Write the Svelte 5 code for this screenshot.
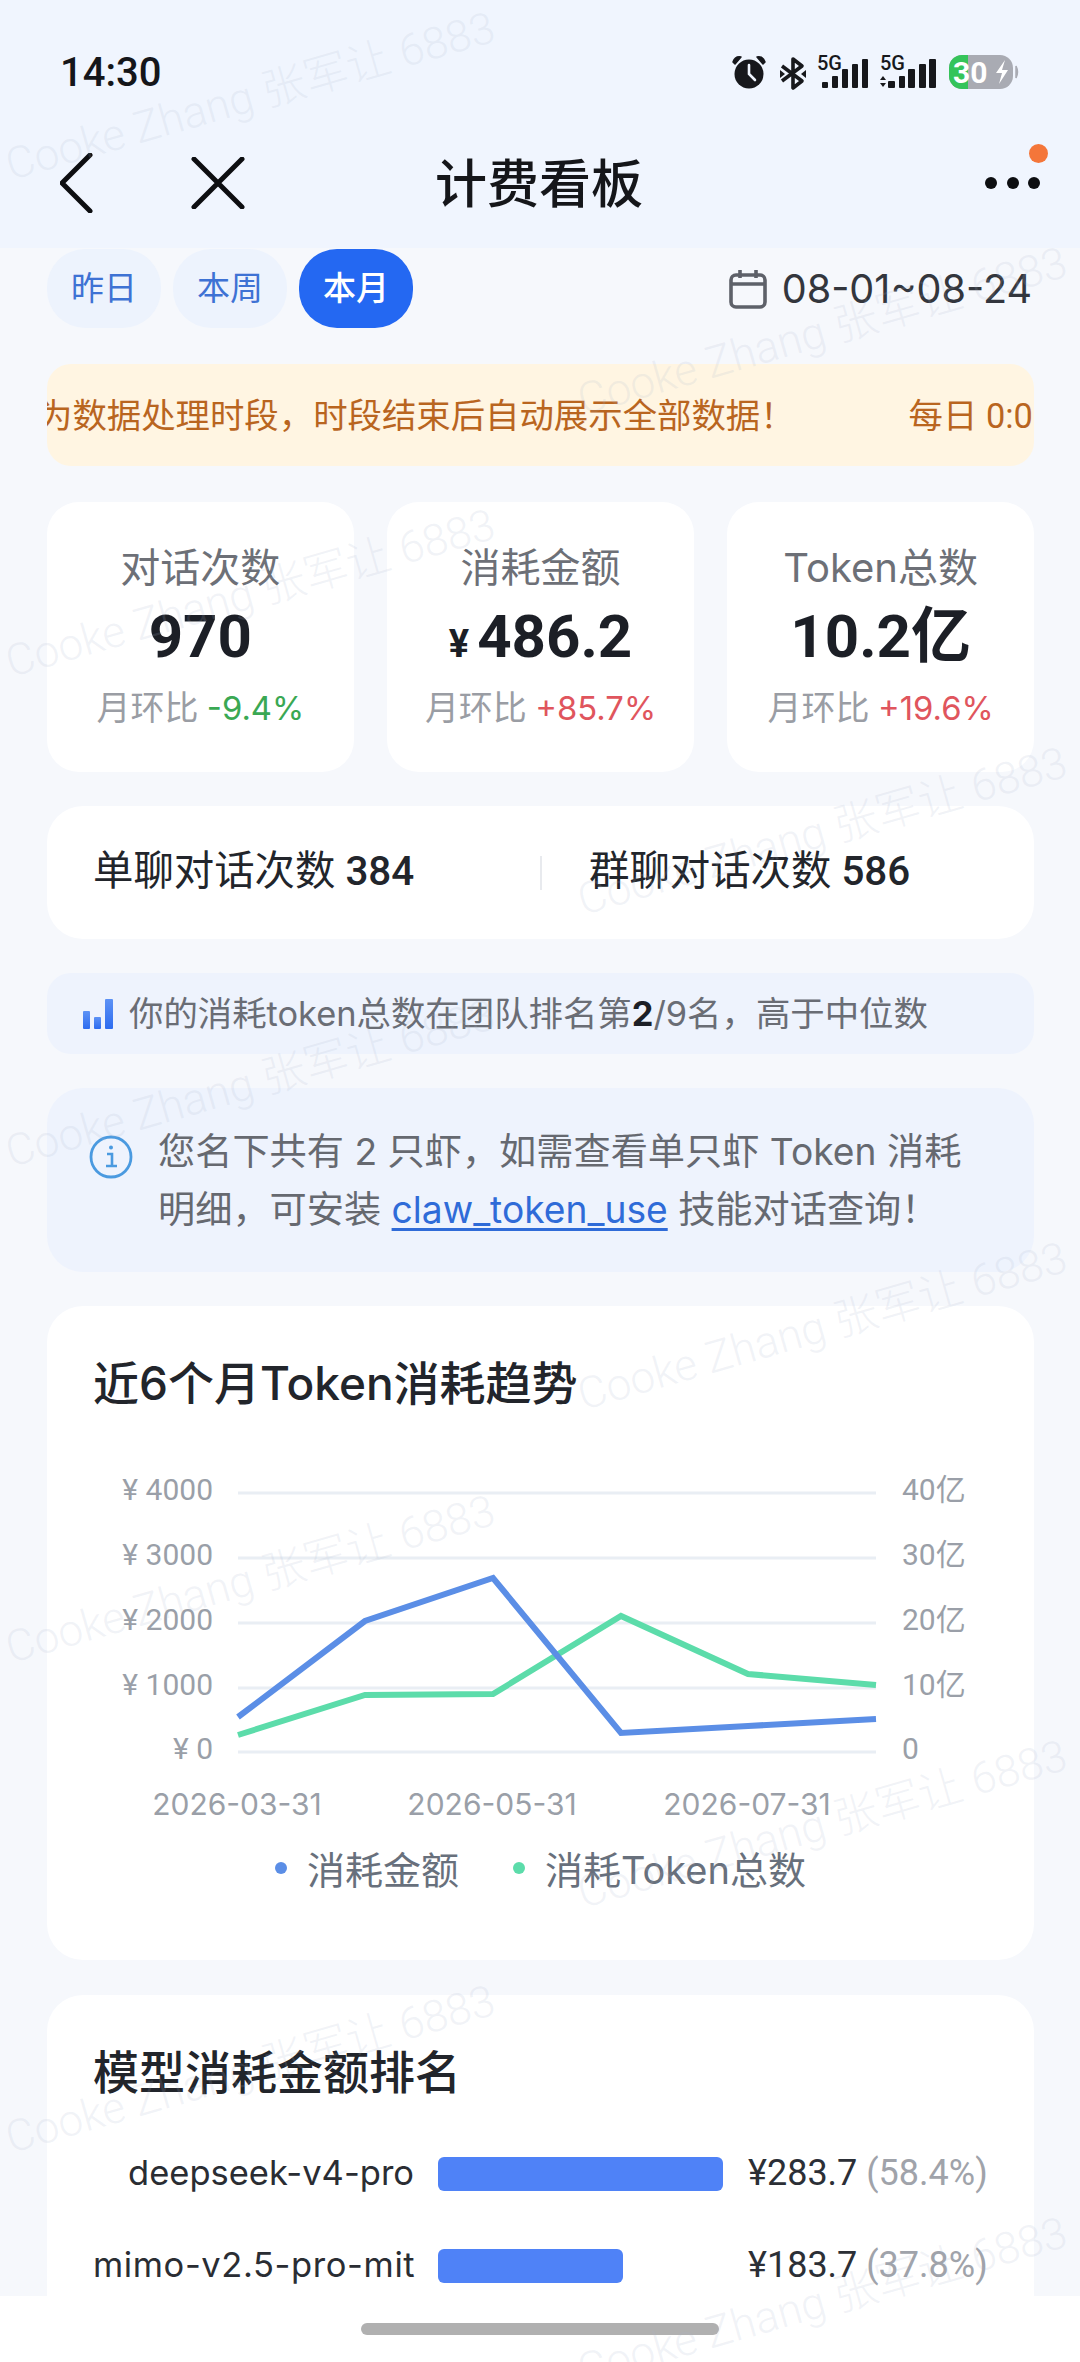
<script>
  const marks = [];
  const left = [187, 684, 1174, 1670, 2160];
  const right = [422, 922, 1417, 1915, 2392];
  for (const y of left) marks.push({ x: 13, y });
  for (const y of right) marks.push({ x: 585, y });

  const stats = [
    { label: '对话次数', value: '970', cur: '', sub: '-9.4%', tone: 'down' },
    { label: '消耗金额', value: '486.2', cur: '¥', sub: '+85.7%', tone: 'up' },
    { label: 'Token总数', value: '10.2亿', cur: '', sub: '+19.6%', tone: 'up' }
  ];
  const gridY = [1493, 1558, 1623, 1688, 1752];
  const leftLabels = ['¥ 4000', '¥ 3000', '¥ 2000', '¥ 1000', '¥ 0'];
  const rightLabels = ['40亿', '30亿', '20亿', '10亿', '0'];
  const xLabels = [{ x: 237, t: '2026-03-31' }, { x: 492, t: '2026-05-31' }, { x: 747, t: '2026-07-31' }];
  const blue = '238,1717 365,1621 493,1578 621,1733 748,1726 876,1719';
  const green = '238,1735 365,1695 493,1694 621,1616 748,1674 876,1685';
  const models = [
    { name: 'deepseek-v4-pro', w: 285, ls: 0, amt: '¥283.7', pct: '(58.4%)' },
    { name: 'mimo-v2.5-pro-mit', w: 185, ls: 0.6, amt: '¥183.7', pct: '(37.8%)' }
  ];
</script>

<div class="page">
  <header class="head">
    <div class="status">
      <span class="time">14:30</span>
      <svg class="sicons" width="340" height="50" viewBox="700 48 340 50" aria-hidden="true">
        <circle cx="749" cy="74" r="14.5" fill="#17181c" />
        <path d="M749 65v9l6 6" fill="none" stroke="#f0f5ff" stroke-width="2.6" stroke-linecap="round" />
        <path d="M733 62q2-6 8-5l-6 7zM765 62q-2-6-8-5l6 7z" fill="#17181c" stroke="#17181c" stroke-width="1.5" stroke-linejoin="round" />
        <path d="M782 66l20 15-9 7V59l9 7-20 15" fill="none" stroke="#17181c" stroke-width="3.6" stroke-linejoin="round" />
        <path d="M780 70l5 4-5 4zM806 70l-5 4 5 4z" fill="#17181c" />
        <text x="817" y="70" class="fg">5G</text>
        <rect x="822" y="82" width="6" height="6" rx="1" /><rect x="832" y="76" width="6" height="12" rx="1" />
        <rect x="842" y="69" width="6" height="19" rx="1" /><rect x="852" y="64" width="6" height="24" rx="1" />
        <rect x="862" y="59" width="6" height="29" rx="1" />
        <text x="880" y="70" class="fg">5G</text>
        <path d="M880 80l3-4 3 4zM880 83l3 4 3-4z" fill="#17181c" />
        <rect x="888" y="81" width="7" height="7" rx="1" /><rect x="899" y="76" width="6" height="12" rx="1" />
        <rect x="908" y="69" width="7" height="19" rx="1" /><rect x="919" y="64" width="7" height="24" rx="1" />
        <rect x="929" y="59" width="7" height="29" rx="1" />
        <rect x="949" y="55" width="64" height="34" rx="13" fill="#a9abb3" />
        <path d="M962 55h6v34h-6a13 13 0 0 1-13-13v-8a13 13 0 0 1 13-13z" fill="#35c45a" />
        <text x="953" y="83" class="bat">30</text>
        <path d="M1005 60l-9 13h6l-3 11 9-14h-6z" fill="#fff" />
        <path d="M1016 66q3 6 0 12z" fill="#a9abb3" stroke="#a9abb3" stroke-width="1.5" />
      </svg>
    </div>
    <nav class="nav">
      <div class="navl">
        <svg width="34" height="60" viewBox="0 0 34 60" aria-hidden="true"><path d="M30 2L2 30l28 28" fill="none" stroke="#0d0e11" stroke-width="5" stroke-linecap="round" stroke-linejoin="round" /></svg>
        <svg width="54" height="52" viewBox="0 0 54 52" aria-hidden="true"><path d="M3 2l48 48M51 2L3 50" fill="none" stroke="#0d0e11" stroke-width="5" stroke-linecap="round" /></svg>
      </div>
      <h1>计费看板</h1>
      <div class="more">
        <i></i><i></i><i></i>
        <b class="dot"></b>
      </div>
    </nav>
  </header>

  <main class="main">
    <div class="filters">
      <div class="tabs">
        <span class="tab">昨日</span>
        <span class="tab">本周</span>
        <span class="tab on">本月</span>
      </div>
      <div class="range">
        <svg width="38" height="40" viewBox="0 0 38 40" aria-hidden="true">
          <rect x="2" y="6" width="34" height="32" rx="5" fill="none" stroke="#5e6169" stroke-width="3.6" />
          <path d="M2 15h34M11 1v8M27 1v8" fill="none" stroke="#5e6169" stroke-width="3.6" />
        </svg>
        <span>08-01~08-24</span>
      </div>
    </div>

    <div class="notice">
      <div class="ticker">
        <span>为数据处理时段，时段结束后自动展示全部数据！</span>
        <span>每日 0:00</span>
      </div>
    </div>

    <section class="stats">
      {#each stats as s}
        <div class="stat">
          <div class="lab">{s.label}</div>
          <div class="val">{#if s.cur}<em>{s.cur}</em>{/if}{s.value}</div>
          <div class="sub">月环比 <span class={s.tone}>{s.sub}</span></div>
        </div>
      {/each}
    </section>

    <section class="chats">
      <div class="c1">单聊对话次数 <b>384</b></div>
      <div class="sep"></div>
      <div class="c2">群聊对话次数 <b>586</b></div>
    </section>

    <section class="rank">
      <svg width="30" height="30" viewBox="0 0 30 30" aria-hidden="true">
        <defs><linearGradient id="bg1" x1="0" y1="0" x2="0" y2="1"><stop offset="0" stop-color="#5d92f5" /><stop offset="1" stop-color="#2d6cf0" /></linearGradient></defs>
        <rect x="0" y="12" width="7" height="18" rx="1" fill="url(#bg1)" /><rect x="11" y="18" width="7" height="12" rx="1" fill="url(#bg1)" /><rect x="22" y="0" width="8" height="30" rx="1" fill="url(#bg1)" />
      </svg>
      <p>你的消耗token总数在团队排名第<strong>2</strong>/9名，高于中位数</p>
    </section>

    <section class="info">
      <svg class="ii" width="44" height="44" viewBox="0 0 44 44" aria-hidden="true">
        <circle cx="22" cy="22" r="20" fill="none" stroke="#4a9ae0" stroke-width="2.8" />
        <path d="M18 19h5v12M17 31h11" fill="none" stroke="#4a9ae0" stroke-width="2.6" />
        <circle cx="22" cy="12.5" r="2" fill="#4a9ae0" />
      </svg>
      <p>您名下共有 2 只虾，如需查看单只虾 Token 消耗<br />明细，可安装 <a href="#top">claw_token_use</a> 技能对话查询！</p>
    </section>

    <section class="card chart">
      <h2>近6个月Token消耗趋势</h2>
      <svg class="plot" width="987" height="380" viewBox="47 1460 987 380" aria-hidden="true">
        {#each gridY as y, i}
          <line x1="238" x2="876" y1={y} y2={y} class="grid" />
          <text x="213" y={y - 4} text-anchor="end" class="ax">{leftLabels[i]}</text>
          <text x="902" y={y - 4} class="ax">{rightLabels[i]}</text>
        {/each}
        {#each xLabels as l}
          <text x={l.x} y="1804" text-anchor="middle" class="ax dt">{l.t}</text>
        {/each}
        <polyline points={green} class="ln" stroke="#5cdcaa" />
        <polyline points={blue} class="ln" stroke="#5b8ee6" />
      </svg>
      <div class="legend">
        <span class="li"><i class="b"></i>消耗金额</span>
        <span class="li"><i class="g"></i>消耗Token总数</span>
      </div>
    </section>

    <section class="card models">
      <h2>模型消耗金额排名</h2>
      <div class="rows">
        {#each models as m}
          <div class="row">
            <span class="mn" style="letter-spacing:{m.ls}px">{m.name}</span>
            <span class="track"><span class="fill" style="width:{m.w}px"></span></span>
            <span class="amt">{m.amt} <span class="pct">{m.pct}</span></span>
          </div>
        {/each}
      </div>
    </section>
  </main>

  <div class="home"><span></span></div>

  <div class="wm" aria-hidden="true">
    {#each marks as m}
      <span style="left:{m.x}px;top:{m.y}px">Cooke Zhang 张军让 6883</span>
    {/each}
  </div>
</div>

<style>
  :global(body) { margin: 0; background: #f6f8fc; }
  .page {
    position: relative; width: 1080px; height: 2362px; overflow: hidden;
    background: #f6f8fc;
    font-family: Roboto, "Noto Sans CJK SC", sans-serif; color: #22252b;
  }
  .head { height: 248px; background: #f0f5fe; box-sizing: border-box; padding: 0 40px 0 60px; display: flex; flex-direction: column; }
  .status { height: 118px; display: flex; justify-content: space-between; align-items: flex-start; }
  .time { font-size: 40px; font-weight: 500; color: #15161a; line-height: 46px; margin-top: 50px; }
  .sicons { margin-top: 48px; fill: #17181c; flex: none; }
  .fg { font: 500 20px Roboto, sans-serif; fill: #17181c; }
  .bat { font: 700 30px Roboto, sans-serif; fill: #fff; }
  .nav { position: relative; height: 130px; display: flex; align-items: center; justify-content: space-between; box-sizing: border-box; }
  .navl { display: flex; align-items: center; gap: 97px; }
  h1 { position: absolute; left: 375px; top: 38px; margin: 0; font-size: 52px; font-weight: 500; line-height: 60px; color: #15161a; }
  .more { position: relative; display: flex; gap: 9.5px; }
  .more i { width: 12px; height: 12px; border-radius: 50%; background: #0d0e11; }
  .dot { position: absolute; right: -8px; top: -33px; width: 19px; height: 19px; border-radius: 50%; background: #f4763a; }

  .main { box-sizing: border-box; padding: 1px 46px 0 47px; display: flex; flex-direction: column; }
  .filters { display: flex; justify-content: space-between; align-items: center; height: 79px; }
  .tabs { display: flex; gap: 12px; }
  .tab { width: 114px; height: 79px; box-sizing: border-box; padding-bottom: 6px; border-radius: 38px; background: #edf3fd; color: #3e72d4; font-size: 33px; display: flex; align-items: center; justify-content: center; }
  .tab.on { background: #2468f2; color: #fff; font-weight: 500; }
  .range { display: flex; align-items: center; gap: 15px; font-family: Inter, sans-serif; font-size: 39.6px; color: #33363d; padding-right: 2px; }
  .notice { margin-top: 36px; height: 102px; box-sizing: border-box; padding-bottom: 5px; border-radius: 24px; background: #fff5e2; overflow: hidden; display: flex; align-items: center; }
  .ticker { display: flex; gap: 114px; white-space: nowrap; font-size: 34.4px; color: #b9651f; margin-left: -9px; flex: none; }

  .stats { margin-top: 36px; display: grid; grid-template-columns: repeat(3, 1fr); gap: 33.5px; }
  .stat { height: 270px; border-radius: 32px; background: #fff; display: flex; flex-direction: column; align-items: center; padding-top: 38px; box-sizing: border-box; }
  .lab { font-family: Inter, "Noto Sans CJK SC", sans-serif; font-size: 40px; line-height: 56px; color: #6d7077; }
  .val { font-size: 60px; font-weight: 700; height: 70px; line-height: 70px; margin-top: 6px; color: #1c1f26; display: flex; align-items: baseline; }
  .val em { font-style: normal; font-size: 38px; margin-right: 8px; }
  .sub { font-size: 34px; height: 48px; line-height: 48px; margin-top: 12px; color: #9a9da4; white-space: nowrap; }
  .sub span { font-family: Inter, sans-serif; font-size: 32.8px; }
  .down { color: #3aa853; }
  .up { color: #e0555d; }

  .chats { margin-top: 34px; height: 133px; box-sizing: border-box; padding: 0 0 10px 46px; border-radius: 36px; background: #fff; display: flex; align-items: center; font-size: 40.4px; color: #22252b; }
  .chats b { font-weight: 500; }
  .c1 { width: 447px; }
  .sep { width: 2px; height: 34px; background: #e8eaee; margin-right: 47px; margin-top: 10px; }
  .rank { margin-top: 34px; height: 81px; border-radius: 24px; background: #eef3fd; display: flex; align-items: center; gap: 16px; padding-left: 36px; }
  .rank p { margin: -5px 0 0; font-family: Inter, "Noto Sans CJK SC", sans-serif; font-size: 34.4px; color: #6a6d75; white-space: nowrap; }
  .rank strong { color: #1c1f26; font-weight: 700; }
  .info { margin-top: 34px; height: 184px; border-radius: 36px; background: #eef3fd; display: flex; align-items: center; padding-left: 42px; gap: 25px; box-sizing: border-box; }
  .ii { flex: none; margin-bottom: 46px; }
  .info p { margin: 2px 0 0; font-family: Inter, "Noto Sans CJK SC", sans-serif; font-size: 37.2px; line-height: 58px; color: #666970; white-space: nowrap; }
  .info a { color: #2f6bd8; text-decoration: underline; text-decoration-thickness: 3px; text-underline-offset: 5px; }

  .card { background: #fff; border-radius: 36px; box-sizing: border-box; padding: 0 46px; }
  h2 { margin: 0; font-family: Inter, "Noto Sans CJK SC", sans-serif; font-size: 46px; font-weight: 500; line-height: 60px; color: #22252b; white-space: nowrap; }
  .chart { margin-top: 34px; height: 654px; padding-top: 47px; position: relative; }
  .plot { display: block; margin: 47px 0 0 -46px; }
  .grid { stroke: #e9eef4; stroke-width: 3; }
  .ax { font: 400 30px Roboto, "Noto Sans CJK SC", sans-serif; fill: #9a9fa8; dominant-baseline: central; }
  .dt { font-family: Inter, sans-serif; }
  .ln { fill: none; stroke-width: 6; stroke-linejoin: miter; }
  .legend { display: flex; justify-content: center; font-family: Inter, "Noto Sans CJK SC", sans-serif; font-size: 38px; color: #68707c; }
  .li { display: flex; align-items: center; gap: 20px; }
  .li + .li { margin-left: 54px; }
  .li i { width: 12px; height: 12px; border-radius: 50%; }
  .b { background: #5b8ee6; }
  .g { background: #5cdcaa; }

  .models { margin-top: 35px; height: 420px; padding-top: 47px; }
  .rows { margin-top: 55px; display: flex; flex-direction: column; gap: 58px; }
  .row { display: flex; align-items: center; height: 34px; font-size: 36px; }
  .mn { width: 321px; text-align: right; font-family: Inter, sans-serif; font-size: 34.5px; font-weight: 400; color: #2a2d33; white-space: nowrap; flex: none; margin-top: -3px; }
  .track { width: 285px; margin-left: 24px; flex: none; display: block; }
  .fill { display: block; height: 34px; border-radius: 6px; background: #4f82f7; }
  .amt { margin-left: 25px; margin-top: -3px; white-space: nowrap; color: #2c2f36; }
  .pct { color: #a0a3aa; }

  .home { position: absolute; left: 0; right: 0; bottom: 0; height: 66px; background: #fff; display: flex; justify-content: center; }
  .home span { width: 358px; height: 12px; border-radius: 6px; background: #b0b0b0; margin-top: 27px; margin-left: -1px; }
  .wm { position: absolute; inset: 0; pointer-events: none; }
  .wm span {
    position: absolute; white-space: nowrap; transform-origin: 0 100%; transform: rotate(-16deg);
    font-size: 44px; font-weight: 300; line-height: 1; color: rgba(170, 182, 205, .17); margin-top: -44px;
  }
</style>
